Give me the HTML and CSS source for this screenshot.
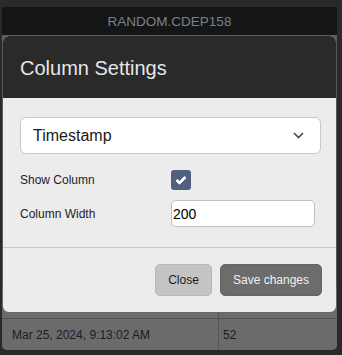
FILE: index.html
```html
<!DOCTYPE html>
<html>
	<head>
		<title>Column Settings</title>
		<meta charset="utf-8" />
		<link rel="stylesheet" href="styles.css">
	</head>
	<body>
		<div class="grid">
			<div class="grid-head">RANDOM.CDEP158</div>
			<div class="grid-body">
				<div class="grid-row">
					<div class="cell cell-time">Mar 25, 2024, 9:12:02 AM</div>
					<div class="cell cell-value">48</div>
				</div>
				<div class="grid-row">
					<div class="cell cell-time">Mar 25, 2024, 9:13:02 AM</div>
					<div class="cell cell-value">52</div>
				</div>
			</div>
		</div>

		<!-- Modal -->
		<div class="modal">
			<div class="modal-header">
				<h2 class="modal-title">Column Settings</h2>
			</div>
			<div class="modal-body">
				<div class="select">
					<span>Timestamp</span>
					<svg width="11" height="7" viewBox="0 0 11 7">
						<path d="M1 1 L5.5 5.5 L10 1" fill="none" stroke="#4a4a4a" stroke-width="1.6" />
					</svg>
				</div>
				<div class="field-list">
					<div class="field-label">Show Column</div>
					<div class="checkbox">
						<svg width="12" height="10" viewBox="0 0 12 10">
							<path d="M1.5 5 L4.5 8 L10.5 2" fill="none" stroke="#ffffff" stroke-width="2.6" />
						</svg>
					</div>
					<div class="field-label">Column Width</div>
					<input class="text-input" type="text" value="200" />
				</div>
			</div>
			<div class="modal-footer">
				<button class="btn btn-close">Close</button>
				<button class="btn btn-save">Save changes</button>
			</div>
		</div>
	</body>
</html>
```

FILE: styles.css
```css
* {
	padding: 0;
	margin: 0;
	box-sizing: border-box;
}

body {
	font-family: "Liberation Sans", Arial, sans-serif;
	background: #2a2a2a;
	width: 342px;
	height: 355px;
	overflow: hidden;
	padding: 7px 5px 0 2px;
}

.grid {
	height: 343px;
	background: #5c5c5c;
	border-radius: 0 0 5px 5px;
	overflow: hidden;
	display: flex;
	flex-direction: column;
}

.grid-head {
	height: 28px;
	background: #141517;
	color: #7c8187;
	font-size: 13.5px;
	display: flex;
	align-items: center;
	justify-content: center;
}

.grid-body {
	flex: 1;
	display: flex;
	flex-direction: column;
	justify-content: flex-end;
}

.grid-row {
	height: 32px;
	display: flex;
	border-top: 1px solid #505050;
	background: #6b6b6b;
	color: #1c1c28;
	font-size: 12px;
}

.cell {
	display: flex;
	align-items: center;
}

.cell-time {
	width: 217px;
	padding-left: 10px;
	border-right: 1px solid #555555;
}

.cell-value {
	flex: 1;
	padding-left: 4px;
}

.modal {
	position: absolute;
	top: 36px;
	left: 3px;
	width: 333px;
	height: 276px;
	border-radius: 6px;
	overflow: hidden;
	background: #ececec;
	display: flex;
	flex-direction: column;
}

.modal-header {
	height: 62px;
	background: #2a2a2a;
	padding-left: 17px;
	display: flex;
	align-items: center;
}

.modal-title {
	font-size: 20px;
	font-weight: normal;
	color: #e6e6e6;
	margin-top: 2px;
}

.modal-body {
	height: 150px;
	padding: 19px 15px 0 17px;
	border-bottom: 1px solid #c9c9c9;
}

.select {
	height: 37px;
	background: #ffffff;
	border: 1px solid #c8c8c8;
	border-radius: 6px;
	padding: 0 16px 0 12px;
	display: flex;
	align-items: center;
	justify-content: space-between;
	font-size: 16px;
	color: #1a1a1a;
}

.field-list {
	margin-top: 16px;
	display: grid;
	grid-template-columns: 151px 144px;
	align-items: center;
	row-gap: 10px;
}

.field-label {
	font-size: 12px;
	color: #1c1c28;
}

.checkbox {
	width: 20px;
	height: 20px;
	background: #51607f;
	border-radius: 3px;
	display: flex;
	align-items: center;
	justify-content: center;
}

.text-input {
	height: 27px;
	border: 1px solid #c0c0c0;
	border-radius: 5px;
	background: #ffffff;
	padding-left: 1px;
	font-family: "Liberation Sans", Arial, sans-serif;
	font-size: 14px;
	color: #000000;
}

.modal-footer {
	flex: 1;
	padding-right: 14px;
	display: flex;
	align-items: center;
	justify-content: flex-end;
	gap: 8px;
}

.btn {
	height: 32px;
	border-radius: 5px;
	font-family: "Liberation Sans", Arial, sans-serif;
	font-size: 12px;
}

.btn-close {
	width: 57px;
	background: #c4c4c4;
	border: 1px solid #b6b6b6;
	color: #1c1c28;
}

.btn-save {
	width: 102px;
	background: #6c6c6c;
	border: 1px solid #666666;
	color: #f0f0f0;
}
```
